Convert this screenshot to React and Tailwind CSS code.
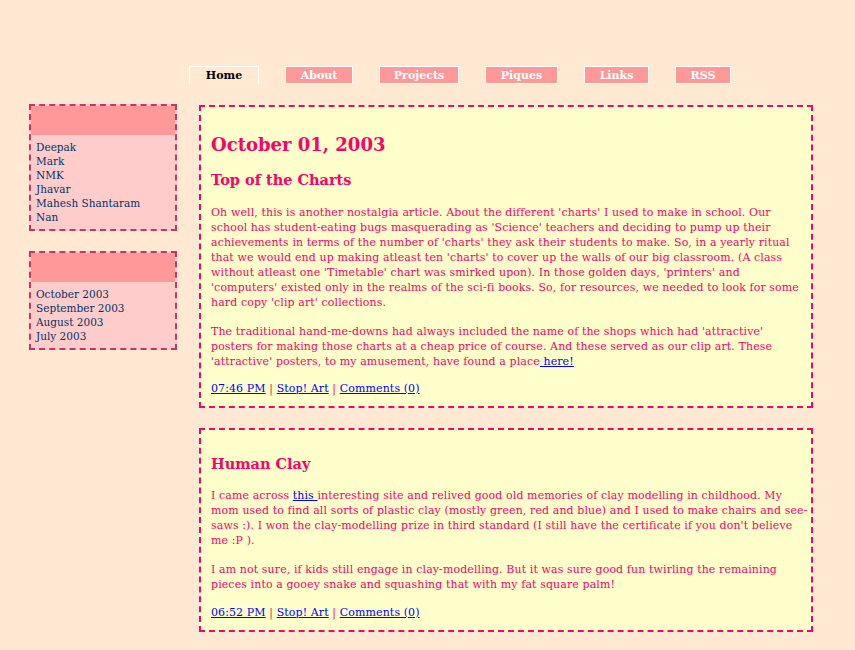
import React from 'react';

const tabs = [
  { label: 'Home', w: 'w-[70px]', active: true },
  { label: 'About', w: 'w-[68px]' },
  { label: 'Projects', w: 'w-[80px]' },
  { label: 'Piques', w: 'w-[73px]' },
  { label: 'Links', w: 'w-[65px]' },
  { label: 'RSS', w: 'w-[56px]' },
];

function SideBox({ items }) {
  return (
    <div className="border-2 border-dashed border-[#cc3366] bg-[#ffcccc]">
      <div className="h-[29px] bg-[#ff9999]" />
      <ul className="px-[5px] pt-[5px] pb-[5px] text-[10.5px] leading-[14px] text-[#003366]">
        {items.map((it) => (
          <li key={it}>
            <a href="#">{it}</a>
          </li>
        ))}
      </ul>
    </div>
  );
}

function Footer({ time, mt }) {
  return (
    <p className={`${mt} text-[11px] leading-[15px] tracking-[0.1px] text-[#ff0066]`}>
      <a href="#" className="text-[#0000ff] underline">{time}</a> |{' '}
      <a href="#" className="text-[#0000ff] underline">Stop! Art</a> |{' '}
      <a href="#" className="text-[#0000ff] underline">Comments (0)</a>
    </p>
  );
}

const para = 'mt-[14px] whitespace-nowrap text-[11px] leading-[15px] tracking-[0.1px]';

export default function App() {
  return (
    <div
      className="min-h-screen bg-[#ffe9d2] text-[#ff0066]"
      style={{ fontFamily: '"DejaVu Serif", "Liberation Serif", serif' }}
    >
      <nav className="flex gap-[26px] pl-[189px] pt-[66px]">
        {tabs.map((t) =>
          t.active ? (
            <a
              key={t.label}
              href="#"
              className={`${t.w} h-[18px] border border-b-0 border-white text-center text-[11px] font-bold leading-[18px] text-black`}
            >
              {t.label}
            </a>
          ) : (
            <a
              key={t.label}
              href="#"
              className={`${t.w} h-[18px] border border-white bg-[#ff9999] text-center text-[11px] font-bold leading-[17px] text-white`}
            >
              {t.label}
            </a>
          )
        )}
      </nav>

      <div className="flex gap-[22px] pl-[29px] pt-[20px]">
        <aside className="flex w-[148px] shrink-0 flex-col gap-[20px]">
          <SideBox items={['Deepak', 'Mark', 'NMK', 'Jhavar', 'Mahesh Shantaram', 'Nan']} />
          <SideBox items={['October 2003', 'September 2003', 'August 2003', 'July 2003']} />
        </aside>

        <main className="flex w-[614px] flex-col gap-[20px] pt-px">
          <article className="border-2 border-dashed border-[#ff0066] bg-[#ffffcc] px-[10px] pt-[10px] pb-[10px]">
            <h2 className="mt-[16px] text-[18px] font-bold leading-[24px]">October 01, 2003</h2>
            <h3 className="mt-[13px] text-[14.5px] font-bold leading-[20px]">Top of the Charts</h3>
            <p className={`${para} !mt-[15px]`}>
              Oh well, this is another nostalgia article. About the different 'charts' I used to make in school. Our<br />
              school has student-eating bugs masquerading as 'Science' teachers and deciding to pump up their<br />
              achievements in terms of the number of 'charts' they ask their students to make. So, in a yearly ritual<br />
              that we would end up making atleast ten 'charts' to cover up the walls of our big classroom. (A class<br />
              without atleast one 'Timetable' chart was smirked upon). In those golden days, 'printers' and<br />
              'computers' existed only in the realms of the sci-fi books. So, for resources, we needed to look for some<br />
              hard copy 'clip art' collections.
            </p>
            <p className={para}>
              The traditional hand-me-downs had always included the name of the shops which had 'attractive'<br />
              posters for making those charts at a cheap price of course. And these served as our clip art. These<br />
              'attractive' posters, to my amusement, have found a place
              <a href="#" className="text-[#0000ff] underline"> here!</a>
            </p>
            <Footer time="07:46 PM" mt="mt-[12px]" />
          </article>

          <article className="border-2 border-dashed border-[#ff0066] bg-[#ffffcc] px-[10px] pt-[10px] pb-[10px]">
            <h3 className="mt-[14px] text-[14.5px] font-bold leading-[20px]">Human Clay</h3>
            <p className={para}>
              I came across <a href="#" className="text-[#0000ff] underline">this </a>
              interesting site and relived good old memories of clay modelling in childhood. My<br />
              mom used to find all sorts of plastic clay (mostly green, red and blue) and I used to make chairs and see-<br />
              saws :). I won the clay-modelling prize in third standard (I still have the certificate if you don't believe<br />
              me :P ).
            </p>
            <p className={para}>
              I am not sure, if kids still engage in clay-modelling. But it was sure good fun twirling the remaining<br />
              pieces into a gooey snake and squashing that with my fat square palm!
            </p>
            <Footer time="06:52 PM" mt="mt-[13px]" />
          </article>
        </main>
      </div>
    </div>
  );
}
